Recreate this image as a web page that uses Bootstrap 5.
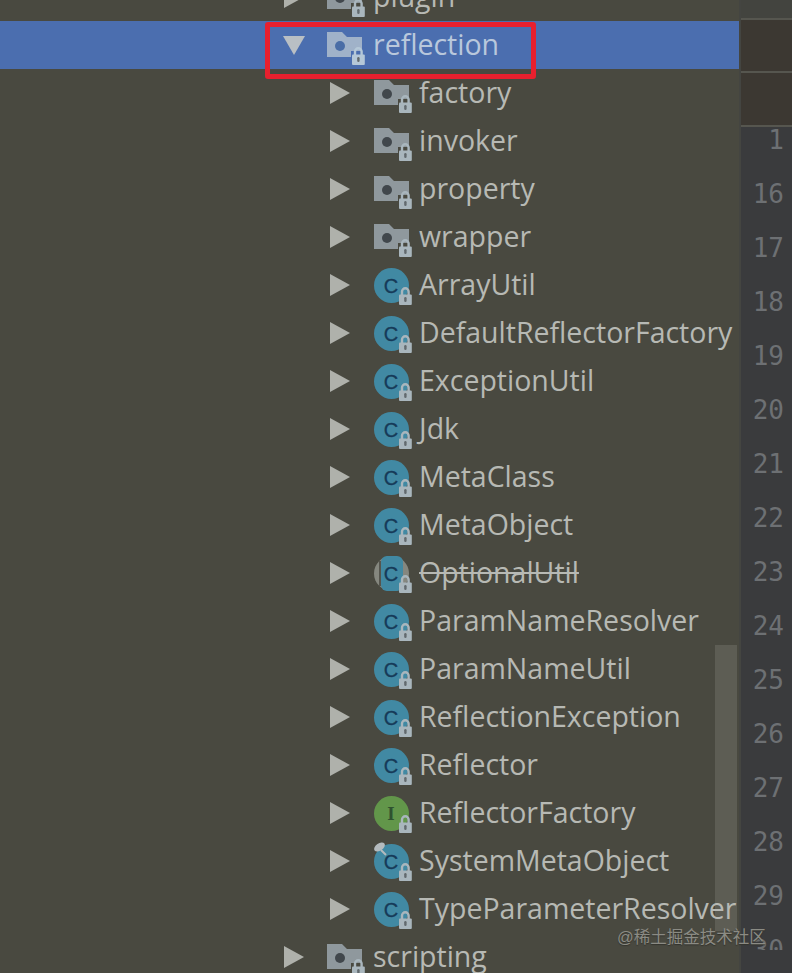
<!DOCTYPE html>
<html lang="en">
<head>
    <meta charset="UTF-8">
    <meta name="viewport" content="width=device-width, initial-scale=1.0">
    <link rel="stylesheet" href="https://cdn.jsdelivr.net/npm/bootstrap@5.3.0/dist/css/bootstrap.min.css">
    <title>Project tree</title>
    <style>
        html, body { height: 100%; }
        body { background: #494940; overflow: hidden; font-family: "Open Sans", "Liberation Sans", sans-serif; }
        .ide-frame { height: 973px; position: relative; overflow: hidden; }
        .tree-pane { width: 739px; background: #494940; overflow: hidden; position: relative; }
        .tree-list { margin-top: -27px; position: relative; }
        .tree-row { height: 48px; color: #b7b9b4; font-size: 28.5px; white-space: nowrap; --pkg-fill: #8f989d; --pkg-dot: #41474c; --lock-fill: #a9b6bd; }
        .tree-row span { margin-bottom: 2px; }
        .tree-row.lvl1 { padding-left: 283px; }
        .tree-row.lvl2 { padding-left: 330px; }
        .tree-row.picked { background: #4b6eaf; color: #b9c8dc; --pkg-fill: #a0b2c9; --pkg-dot: #4a6da6; --lock-fill: #b5c8d8; }
        .tree-arrow { width: 22px; height: 24px; margin-right: 22px; flex: none; }
        .tree-icon { width: 40px; height: 40px; margin-right: 6px; flex: none; }
        .lvl2 .tree-icon { margin-right: 5px; }
        .pkg-body { fill: var(--pkg-fill); }
        .pkg-dot { fill: var(--pkg-dot); }
        .lock-body { fill: var(--lock-fill); }
        .lock-loop { fill: none; stroke: var(--lock-fill); stroke-width: 2.4; }
        .struck { text-decoration: line-through; }
        .gutter-pane { width: 53px; background: #3a3b3d; border-left: 2px solid #444541; }
        .tab-strip { background: #43443f; height: 20px; border-bottom: 2px solid #56564f; }
        .tool-strip { background: #3c3832; height: 54px; border-bottom: 2px solid #56564f; }
        .tool-strip.first { height: 53px; }
        .line-clip { height: 823px; overflow: hidden; }
        .line-nums { font-family: "DejaVu Sans Mono", monospace; font-size: 26px; color: #6d7073; line-height: 54px; text-align: right; padding-right: 8px; margin-top: -14px; }
        .tree-scroll { position: absolute; left: 715px; top: 645px; width: 22px; height: 286px; background: #5d5d54; }
        .red-mark { position: absolute; left: 265px; top: 22px; width: 271px; height: 57px; border: 5px solid #e8202e; border-radius: 3px; }
        .site-mark { position: absolute; left: 617px; top: 925px; font-family: "Liberation Sans", "Noto Sans CJK SC", sans-serif; font-size: 16.5px; line-height: 24px; color: #8b8b84; text-shadow: 0 1px 1px #33332d; white-space: nowrap; }
    </style>
</head>
<body>

    <!-- shared icons -->
    <svg width="0" height="0" class="position-absolute">
        <defs>
            <symbol id="lock" viewBox="0 0 40 40">
                <path class="lock-loop" d="M28 31v-4.400a3.300 3.300 0 0 1 6.600 0V31"/>
                <rect class="lock-body" x="25" y="29.500" width="12.800" height="10.500" rx="1"/>
                <rect x="30.200" y="32" width="2.400" height="5" rx="1.200" fill="#626a6e"/>
            </symbol>
            <symbol id="ico-pkg" viewBox="0 0 40 40">
                <path class="pkg-body" d="M0 7h15l5 5h15v14h-11v6H0z"/>
                <circle class="pkg-dot" cx="13" cy="21" r="5"/>
                <use href="#lock" width="40" height="40"/>
            </symbol>
            <symbol id="ico-class" viewBox="0 0 40 40">
                <circle cx="17.500" cy="20.500" r="17.500" fill="#4189a3"/>
                <text x="17" y="27.500" text-anchor="middle" font-family="Liberation Sans, sans-serif" font-size="20" fill="#163a58" stroke="#163a58" stroke-width="0.300">C</text>
                <use href="#lock" width="40" height="40"/>
            </symbol>
            <symbol id="ico-face" viewBox="0 0 40 40">
                <circle cx="17.500" cy="20.500" r="17.500" fill="#62964a"/>
                <text x="17" y="27" text-anchor="middle" font-family="Liberation Serif, serif" font-size="19" font-weight="700" fill="#2f5230">I</text>
                <use href="#lock" width="40" height="40"/>
            </symbol>
        </defs>
    </svg>

    <div class="ide-frame d-flex">
        <div class="tree-pane flex-shrink-0">
            <div class="tree-scroll"></div>
            <div class="tree-list">
                <div class="tree-row lvl1 d-flex align-items-center">
                    <svg class="tree-arrow" viewBox="0 0 22 24"><path d="M1 1l20 11L1 23z" fill="#afb1ab"/></svg>
                    <svg class="tree-icon"><use href="#ico-pkg"/></svg><span>plugin</span>
                </div>
                <div class="tree-row lvl1 picked d-flex align-items-center">
                    <svg class="tree-arrow" viewBox="0 0 22 24"><path d="M0 3h22L11 22z" fill="#b9bfc4"/></svg>
                    <svg class="tree-icon"><use href="#ico-pkg"/></svg><span>reflection</span>
                </div>
                <div class="tree-row lvl2 d-flex align-items-center">
                    <svg class="tree-arrow" viewBox="0 0 22 24"><path d="M0 1l20 11L0 23z" fill="#afb1ab"/></svg>
                    <svg class="tree-icon"><use href="#ico-pkg"/></svg><span>factory</span>
                </div>
                <div class="tree-row lvl2 d-flex align-items-center">
                    <svg class="tree-arrow" viewBox="0 0 22 24"><path d="M0 1l20 11L0 23z" fill="#afb1ab"/></svg>
                    <svg class="tree-icon"><use href="#ico-pkg"/></svg><span>invoker</span>
                </div>
                <div class="tree-row lvl2 d-flex align-items-center">
                    <svg class="tree-arrow" viewBox="0 0 22 24"><path d="M0 1l20 11L0 23z" fill="#afb1ab"/></svg>
                    <svg class="tree-icon"><use href="#ico-pkg"/></svg><span>property</span>
                </div>
                <div class="tree-row lvl2 d-flex align-items-center">
                    <svg class="tree-arrow" viewBox="0 0 22 24"><path d="M0 1l20 11L0 23z" fill="#afb1ab"/></svg>
                    <svg class="tree-icon"><use href="#ico-pkg"/></svg><span>wrapper</span>
                </div>
                <div class="tree-row lvl2 d-flex align-items-center">
                    <svg class="tree-arrow" viewBox="0 0 22 24"><path d="M0 1l20 11L0 23z" fill="#afb1ab"/></svg>
                    <svg class="tree-icon"><use href="#ico-class"/></svg><span>ArrayUtil</span>
                </div>
                <div class="tree-row lvl2 d-flex align-items-center">
                    <svg class="tree-arrow" viewBox="0 0 22 24"><path d="M0 1l20 11L0 23z" fill="#afb1ab"/></svg>
                    <svg class="tree-icon"><use href="#ico-class"/></svg><span>DefaultReflectorFactory</span>
                </div>
                <div class="tree-row lvl2 d-flex align-items-center">
                    <svg class="tree-arrow" viewBox="0 0 22 24"><path d="M0 1l20 11L0 23z" fill="#afb1ab"/></svg>
                    <svg class="tree-icon"><use href="#ico-class"/></svg><span>ExceptionUtil</span>
                </div>
                <div class="tree-row lvl2 d-flex align-items-center">
                    <svg class="tree-arrow" viewBox="0 0 22 24"><path d="M0 1l20 11L0 23z" fill="#afb1ab"/></svg>
                    <svg class="tree-icon"><use href="#ico-class"/></svg><span>Jdk</span>
                </div>
                <div class="tree-row lvl2 d-flex align-items-center">
                    <svg class="tree-arrow" viewBox="0 0 22 24"><path d="M0 1l20 11L0 23z" fill="#afb1ab"/></svg>
                    <svg class="tree-icon"><use href="#ico-class"/></svg><span>MetaClass</span>
                </div>
                <div class="tree-row lvl2 d-flex align-items-center">
                    <svg class="tree-arrow" viewBox="0 0 22 24"><path d="M0 1l20 11L0 23z" fill="#afb1ab"/></svg>
                    <svg class="tree-icon"><use href="#ico-class"/></svg><span>MetaObject</span>
                </div>
                <div class="tree-row lvl2 d-flex align-items-center">
                    <svg class="tree-arrow" viewBox="0 0 22 24"><path d="M0 1l20 11L0 23z" fill="#afb1ab"/></svg>
                    <svg class="tree-icon" viewBox="0 0 40 40">
                        <circle cx="17.500" cy="20.500" r="17.500" fill="#85877f"/>
                        <rect x="5" y="8" width="2" height="25" fill="#55554e"/>
                        <rect x="7" y="3" width="22" height="35" rx="6" fill="#4189a3"/>
                        <text x="17" y="27.500" text-anchor="middle" font-family="Liberation Sans, sans-serif" font-size="20" fill="#163a58" stroke="#163a58" stroke-width="0.300">C</text>
                        <use href="#lock" width="40" height="40"/>
                    </svg><span class="struck">OptionalUtil</span>
                </div>
                <div class="tree-row lvl2 d-flex align-items-center">
                    <svg class="tree-arrow" viewBox="0 0 22 24"><path d="M0 1l20 11L0 23z" fill="#afb1ab"/></svg>
                    <svg class="tree-icon"><use href="#ico-class"/></svg><span>ParamNameResolver</span>
                </div>
                <div class="tree-row lvl2 d-flex align-items-center">
                    <svg class="tree-arrow" viewBox="0 0 22 24"><path d="M0 1l20 11L0 23z" fill="#afb1ab"/></svg>
                    <svg class="tree-icon"><use href="#ico-class"/></svg><span>ParamNameUtil</span>
                </div>
                <div class="tree-row lvl2 d-flex align-items-center">
                    <svg class="tree-arrow" viewBox="0 0 22 24"><path d="M0 1l20 11L0 23z" fill="#afb1ab"/></svg>
                    <svg class="tree-icon"><use href="#ico-class"/></svg><span>ReflectionException</span>
                </div>
                <div class="tree-row lvl2 d-flex align-items-center">
                    <svg class="tree-arrow" viewBox="0 0 22 24"><path d="M0 1l20 11L0 23z" fill="#afb1ab"/></svg>
                    <svg class="tree-icon"><use href="#ico-class"/></svg><span>Reflector</span>
                </div>
                <div class="tree-row lvl2 d-flex align-items-center">
                    <svg class="tree-arrow" viewBox="0 0 22 24"><path d="M0 1l20 11L0 23z" fill="#afb1ab"/></svg>
                    <svg class="tree-icon"><use href="#ico-face"/></svg><span>ReflectorFactory</span>
                </div>
                <div class="tree-row lvl2 d-flex align-items-center">
                    <svg class="tree-arrow" viewBox="0 0 22 24"><path d="M0 1l20 11L0 23z" fill="#afb1ab"/></svg>
                    <svg class="tree-icon" viewBox="0 0 40 40">
                        <use href="#ico-class" width="40" height="40"/>
                        <ellipse cx="5.500" cy="6" rx="6" ry="3.600" transform="rotate(-35 5.500 6)" fill="#b4bbbe"/>
                        <path d="M7 9l5 5" stroke="#b4bbbe" stroke-width="2"/>
                    </svg><span>SystemMetaObject</span>
                </div>
                <div class="tree-row lvl2 d-flex align-items-center">
                    <svg class="tree-arrow" viewBox="0 0 22 24"><path d="M0 1l20 11L0 23z" fill="#afb1ab"/></svg>
                    <svg class="tree-icon"><use href="#ico-class"/></svg><span>TypeParameterResolver</span>
                </div>
                <div class="tree-row lvl1 d-flex align-items-center">
                    <svg class="tree-arrow" viewBox="0 0 22 24"><path d="M1 1l20 11L1 23z" fill="#afb1ab"/></svg>
                    <svg class="tree-icon"><use href="#ico-pkg"/></svg><span>scripting</span>
                </div>
            </div>
        </div>
        <div class="gutter-pane flex-grow-1 overflow-hidden">
            <div class="tab-strip"></div>
            <div class="tool-strip first"></div>
            <div class="tool-strip"></div>
            <div class="line-clip">
                <div class="line-nums">
                    <div>1</div><div>16</div><div>17</div><div>18</div><div>19</div><div>20</div><div>21</div><div>22</div>
                    <div>23</div><div>24</div><div>25</div><div>26</div><div>27</div><div>28</div><div>29</div><div>30</div>
                </div>
            </div>
        </div>

        <div class="red-mark"></div>
        <div class="site-mark">@稀土掘金技术社区</div>
    </div>

    <script src="https://cdn.jsdelivr.net/npm/bootstrap@5.3.0/dist/js/bootstrap.bundle.min.js"></script>
</body>
</html>
